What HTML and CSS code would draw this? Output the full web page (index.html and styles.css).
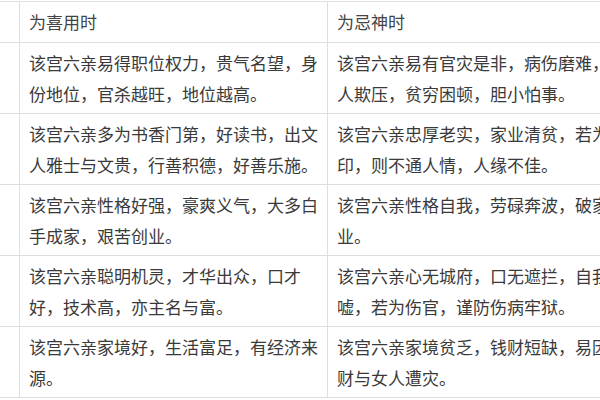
FILE: index.html
```html
<!DOCTYPE html>
<html lang="zh-CN">
<head>
<meta charset="utf-8">
<title>六亲</title>
<link rel="stylesheet" href="styles.css">
</head>
<body>
<div class="table">
  <div class="cell side head"></div>
  <div class="cell head">为喜用时</div>
  <div class="cell head">为忌神时</div>

  <div class="cell side"></div>
  <div class="cell">该宫六亲易得职位权力，贵气名望，身份地位，官杀越旺，地位越高。</div>
  <div class="cell">该宫六亲易有官灾是非，病伤磨难，被人欺压，贫穷困顿，胆小怕事。</div>

  <div class="cell side"></div>
  <div class="cell">该宫六亲多为书香门第，好读书，出文人雅士与文贵，行善积德，好善乐施。</div>
  <div class="cell">该宫六亲忠厚老实，家业清贫，若为枭印，则不通人情，人缘不佳。</div>

  <div class="cell side"></div>
  <div class="cell">该宫六亲性格好强，豪爽义气，大多白手成家，艰苦创业。</div>
  <div class="cell">该宫六亲性格自我，劳碌奔波，破家败业。</div>

  <div class="cell side"></div>
  <div class="cell">该宫六亲聪明机灵，才华出众，口才好，技术高，亦主名与富。</div>
  <div class="cell">该宫六亲心无城府，口无遮拦，自我吹嘘，若为伤官，谨防伤病牢狱。</div>

  <div class="cell side"></div>
  <div class="cell">该宫六亲家境好，生活富足，有经济来源。</div>
  <div class="cell">该宫六亲家境贫乏，钱财短缺，易因钱财与女人遭灾。</div>
</div>
</body>
</html>
```

FILE: styles.css
```css
html, body {
  margin: 0;
  padding: 0;
  background: #ffffff;
  overflow: hidden;
  width: 600px;
  height: 400px;
}

body {
  padding-top: 1px;
  box-sizing: border-box;
  font-family: "Noto Sans CJK SC", "Noto Sans", sans-serif;
  color: #3a3a3a;
}

.table {
  display: grid;
  grid-template-columns: 20px 308px 308px;
  grid-template-rows: 41px repeat(5, 71px);
  width: 636px;
  border-top: 1px solid #e2e2e2;
}

.cell {
  display: flex;
  align-items: center;
  box-sizing: border-box;
  padding: 0 9px 1px 9px;
  border-right: 1px solid #dedede;
  border-bottom: 1px solid #dedede;
  font-size: 17px;
  line-height: 31px;
  line-break: strict;
}

.side {
  padding: 0;
}

.head {
  color: #444444;
}
```
